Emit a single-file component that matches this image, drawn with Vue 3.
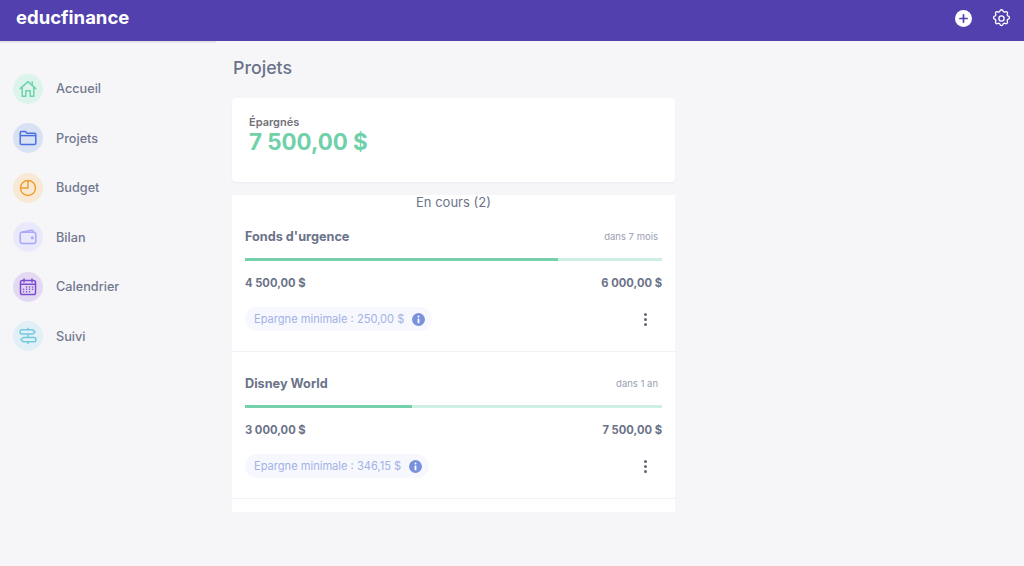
<template>
  <div class="page">
    <header class="topbar">
      <div class="logo">educfinance</div>
      <div class="top-actions">
        <svg class="plus" width="17" height="17" viewBox="0 0 18 18">
          <circle cx="9" cy="9" r="9" fill="#fff" />
          <path d="M9 5.200v7.600M5.200 9h7.600" stroke="#5140ae" stroke-width="1.800" stroke-linecap="round" />
        </svg>
        <svg class="gear" width="21" height="21" viewBox="0 0 24 24" fill="none" stroke="#fff" stroke-width="1.500" stroke-linejoin="round">
          <path d="M10.300 3.300c.4-1.700 3-1.700 3.400 0a1.700 1.700 0 0 0 2.600 1.100c1.500-.9 3.300.8 2.400 2.400a1.700 1.700 0 0 0 1 2.500c1.800.5 1.800 3 0 3.400a1.700 1.700 0 0 0-1 2.600c.9 1.500-.9 3.300-2.400 2.400a1.700 1.700 0 0 0-2.600 1c-.4 1.800-3 1.800-3.400 0a1.700 1.700 0 0 0-2.600-1c-1.500.9-3.300-.9-2.400-2.400a1.700 1.700 0 0 0-1-2.600c-1.800-.4-1.800-2.900 0-3.400a1.700 1.700 0 0 0 1-2.500c-.9-1.600.9-3.300 2.400-2.400a1.700 1.700 0 0 0 2.600-1.100z" />
          <circle cx="12" cy="12" r="3" />
        </svg>
      </div>
    </header>

    <div class="body">
      <aside class="sidebar">
        <a v-for="item in menu" :key="item.label" class="menu-item">
          <span class="menu-icon" :class="item.cls">
            <svg v-if="item.cls === 'home'" width="20" height="20" viewBox="0 0 20 20" fill="none" stroke="#6fd3ac" stroke-width="1.500" stroke-linejoin="round" stroke-linecap="round">
              <path d="M2.200 9.600 10 2.600l7.800 7M4.200 8.200v9h3.600v-5.400h4.400v5.400h3.600v-9" />
              <path d="M14.200 2.800v2.600" />
            </svg>
            <svg v-else-if="item.cls === 'folder'" width="20" height="20" viewBox="0 0 20 20" fill="none" stroke="#4a70e0" stroke-width="1.500" stroke-linejoin="round">
              <path d="M2.200 5c0-.8.6-1.400 1.400-1.400h3.800l1.600 1.600h7.400c.8 0 1.400.6 1.400 1.400v8.700c0 .8-.6 1.300-1.400 1.300H3.600c-.8 0-1.400-.5-1.400-1.300z" />
              <path d="M2.200 7.600h15.600" />
            </svg>
            <svg v-else-if="item.cls === 'pie'" width="20" height="20" viewBox="0 0 20 20" fill="none" stroke="#eda02f" stroke-width="1.500" stroke-linejoin="round">
              <circle cx="10" cy="10" r="7.500" />
              <path d="M10 2.500V10H2.500" />
            </svg>
            <svg v-else-if="item.cls === 'wallet'" width="20" height="20" viewBox="0 0 20 20" fill="none" stroke="#a9a8fb" stroke-width="1.500" stroke-linejoin="round">
              <rect x="2.200" y="5.200" width="15.600" height="11.300" rx="2.200" />
              <path d="M3.500 5.200 13.600 3.300c1-.2 1.800.4 1.800 1.400v.5" />
              <circle cx="14.300" cy="10.800" r=".8" fill="#a9a8fb" />
            </svg>
            <svg v-else-if="item.cls === 'calendar'" width="20" height="20" viewBox="0 0 20 20" fill="none" stroke="#7d4fd0" stroke-width="1.500" stroke-linecap="round">
              <rect x="2.500" y="3.500" width="15" height="14" rx="1.800" />
              <path d="M2.500 7.300h15M6 2v3M14 2v3" />
              <path d="M8.500 10h.1M11.500 10h.1M14.500 10h.1M5.500 12.200h.1M8.500 12.200h.1M11.500 12.200h.1M14.500 12.200h.1M5.500 14.800h.1M8.500 14.800h.1M11.500 14.800h.1" stroke-width="1.600" />
            </svg>
            <svg v-else width="20" height="20" viewBox="0 0 20 20" fill="none" stroke="#74c9dc" stroke-width="1.500" stroke-linejoin="round">
              <path d="M3.500 3.800h11.200l2.300 2.100-2.300 2.100H3.500c-.8 0-1.300-.5-1.300-1.200V5c0-.7.500-1.200 1.300-1.200z" />
              <path d="M16.500 11.500H5.300L3 13.600l2.300 2.100h11.200c.8 0 1.300-.5 1.300-1.200V12.700c0-.7-.5-1.200-1.300-1.200z" />
              <path d="M10 8v3.500M10 15.700v2.300M10 1.800v2" />
            </svg>
          </span>
          <span class="menu-label">{{ item.label }}</span>
        </a>
      </aside>

      <main class="content">
        <h1 class="title">Projets</h1>

        <section class="saved-card">
          <div class="saved-label">Épargnés</div>
          <div class="saved-amount">7 500,00 $</div>
        </section>

        <section class="list-card">
          <div class="list-title">En cours (2)</div>
          <article v-for="p in projects" :key="p.name" class="project">
            <div class="project-head">
              <span class="project-name">{{ p.name }}</span>
              <span class="project-when">{{ p.when }}</span>
            </div>
            <div class="track">
              <div class="fill" :style="{ width: p.percent + '%' }"></div>
            </div>
            <div class="amounts">
              <span>{{ p.current }}</span>
              <span>{{ p.target }}</span>
            </div>
            <div class="project-foot">
              <div class="pill">
                <span class="pill-text">Épargne minimale : {{ p.minimum }}</span>
                <svg width="13" height="13" viewBox="0 0 13 13">
                  <circle cx="6.500" cy="6.500" r="6.500" fill="#7a92dc" />
                  <circle cx="6.500" cy="3.500" r="1" fill="#fff" />
                  <rect x="5.600" y="5.400" width="1.800" height="4.800" rx=".5" fill="#fff" />
                </svg>
              </div>
              <div class="dots"><i></i><i></i><i></i></div>
            </div>
          </article>
        </section>
      </main>
    </div>
  </div>
</template>

<script setup>
const menu = [
  { label: 'Accueil', cls: 'home' },
  { label: 'Projets', cls: 'folder' },
  { label: 'Budget', cls: 'pie' },
  { label: 'Bilan', cls: 'wallet' },
  { label: 'Calendrier', cls: 'calendar' },
  { label: 'Suivi', cls: 'sign' }
]

const projects = [
  { name: "Fonds d'urgence", when: 'dans 7 mois', current: '4 500,00 $', target: '6 000,00 $', minimum: '250,00 $', percent: 75 },
  { name: 'Disney World', when: 'dans 1 an', current: '3 000,00 $', target: '7 500,00 $', minimum: '346,15 $', percent: 40 }
]
</script>

<style>
html, body {
  margin: 0;
  background: #f6f6f9;
}
</style>

<style scoped>
.page {
  height: 566px;
  overflow: hidden;
  background: #f6f6f9;
  font-family: Inter, "Liberation Sans", sans-serif;
  color: #6b7389;
}

.topbar {
  height: 41px;
  background: #5140ae;
  display: flex;
  align-items: center;
  justify-content: space-between;
  padding: 0 12px 0 16px;
}

.logo {
  color: #fff;
  font-size: 18.500px;
  font-weight: 700;
  margin-top: -7px;
}

.top-actions {
  display: flex;
  align-items: center;
  gap: 19.500px;
  margin-top: -5px;
}

.body {
  display: flex;
}

.sidebar {
  width: 216px;
  flex-shrink: 0;
  box-sizing: border-box;
  padding-top: 30.500px;
  display: flex;
  flex-direction: column;
  gap: 19.600px;
  border-top: 2px solid #e4e4ea;
  height: 300px;
}

.menu-item {
  display: flex;
  align-items: center;
  gap: 13px;
  padding-left: 13px;
  height: 30px;
  font-size: 12.700px;
  font-weight: 500;
  color: #71788e;
}

.menu-icon {
  width: 30px;
  height: 30px;
  border-radius: 50%;
  display: flex;
  align-items: center;
  justify-content: center;
}

.home { background: #dcf4ec; }
.folder { background: #d9e1f5; }
.pie { background: #f8e8d6; }
.wallet { background: #e9e9fb; }
.calendar { background: #e3d9f3; }
.sign { background: #e1f0f6; }

.content {
  width: 443px;
  margin-left: 16px;
}

.title {
  margin: 16px 0 0;
  height: 22px;
  line-height: 22px;
  padding-left: 1px;
  font-size: 17.800px;
  font-weight: 500;
  color: #6b7389;
}

.saved-card {
  margin-top: 19px;
  height: 84px;
  box-sizing: border-box;
  padding: 17px 17px 0;
  background: #fff;
  border-radius: 4px;
  box-shadow: 0 1px 2px rgba(60, 60, 90, 0.05);
}

.saved-label {
  font-size: 11px;
  font-weight: 600;
  line-height: 14px;
  color: #71717a;
}

.saved-amount {
  font-size: 22.300px;
  font-weight: 700;
  line-height: 24px;
  margin-top: 1px;
  color: #6fd0a9;
}

.list-card {
  margin-top: 13px;
  height: 317px;
  background: #fff;
}

.list-title {
  text-align: center;
  font-size: 13px;
  line-height: 15px;
  height: 10px;
  color: #6b7389;
}

.project {
  box-sizing: border-box;
  height: 147px;
  padding: 21px 13px 0;
  border-bottom: 1px solid #f1f1f4;
}

.project-head {
  display: flex;
  justify-content: space-between;
  align-items: center;
  padding-right: 4px;
  height: 20px;
}

.project-name {
  font-size: 12.700px;
  font-weight: 700;
  color: #6b7389;
}

.project-when {
  font-size: 9.500px;
  color: #98a0b2;
}

.track {
  margin-top: 12px;
  height: 3px;
  background: #cdf0e2;
}

.fill {
  height: 100%;
  background: #74d1ac;
}

.amounts {
  margin-top: 14px;
  display: flex;
  justify-content: space-between;
  font-size: 11.200px;
  line-height: 16px;
  font-weight: 700;
  color: #6b7389;
}

.project-foot {
  margin-top: 16px;
  display: flex;
  justify-content: space-between;
  align-items: center;
  padding-right: 15px;
}

.pill {
  height: 24px;
  display: flex;
  align-items: center;
  gap: 8px;
  padding: 0 7px 0 9px;
  background: #f6f8fe;
  border-radius: 12px;
}

.pill-text {
  font-size: 11.100px;
  line-height: 11px;
  height: 11px;
  overflow: hidden;
  color: #a3b2e6;
}

.dots {
  display: flex;
  flex-direction: column;
  gap: 2px;
}

.dots i {
  width: 3px;
  height: 3px;
  border-radius: 50%;
  background: #5f6679;
}
</style>
